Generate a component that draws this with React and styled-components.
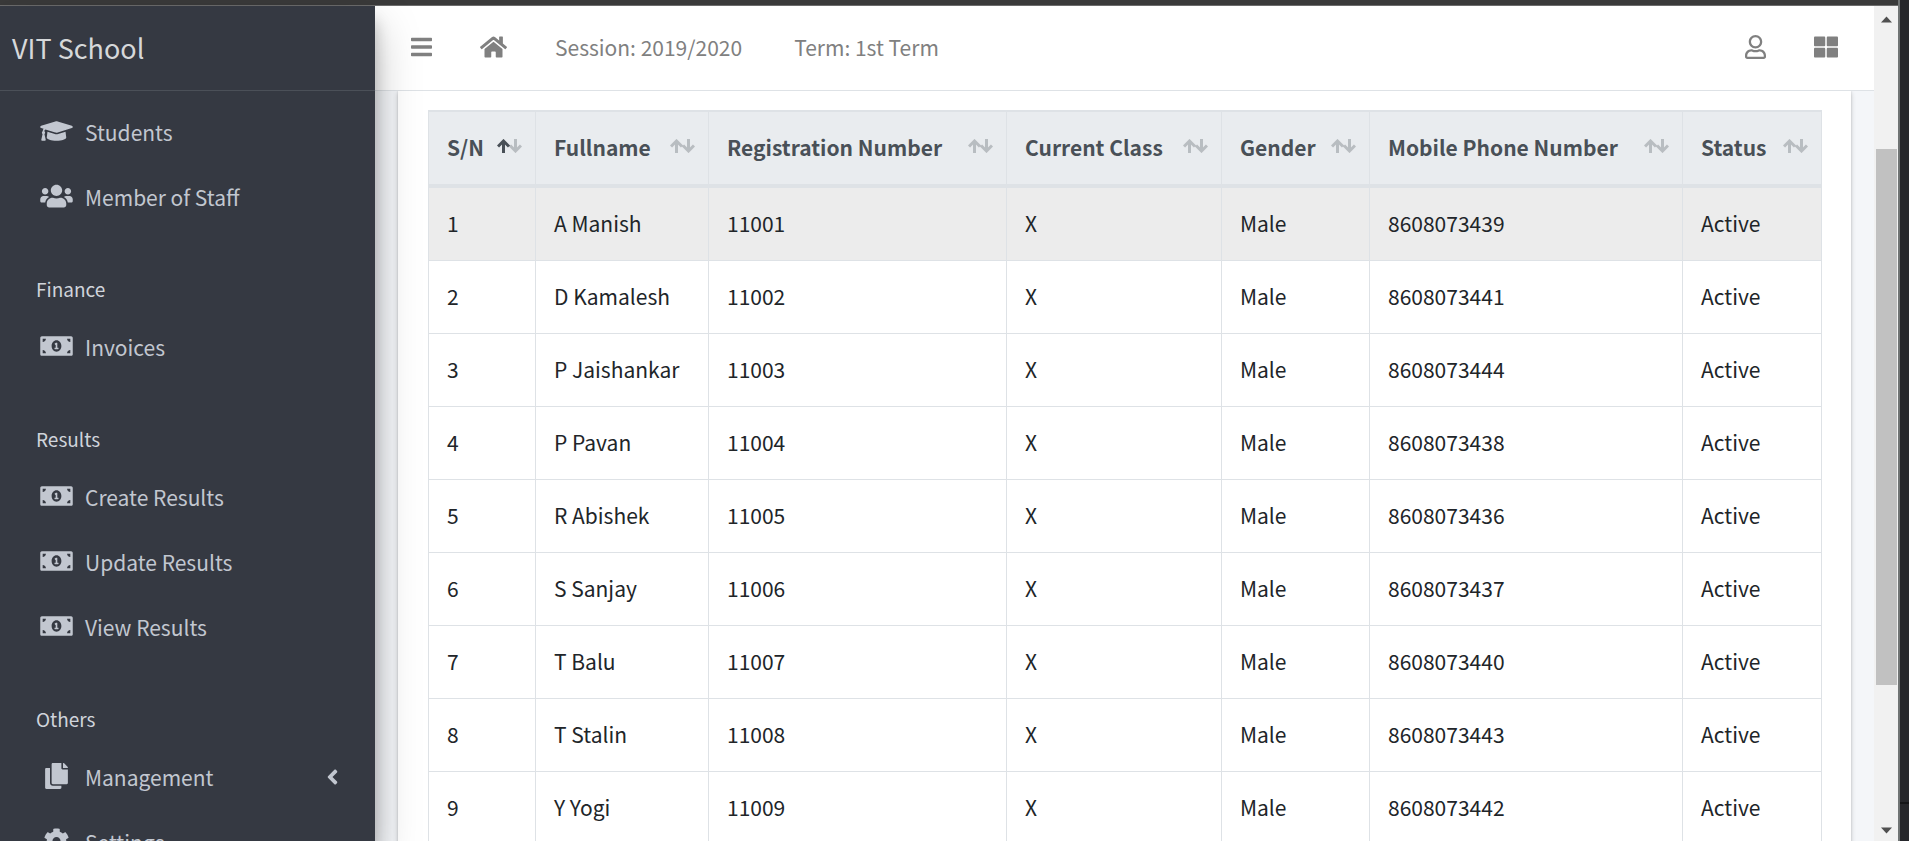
import React from "react";
import styled, { createGlobalStyle } from "styled-components";
import {
  FaAngleLeft,
  FaBars,
  FaCog,
  FaCopy,
  FaGraduationCap,
  FaHome,
  FaMoneyBillAlt,
  FaRegUser,
  FaThLarge,
  FaUsers,
} from "react-icons/fa";

const menu = [
  {
    items: [
      { label: "Students", icon: FaGraduationCap },
      { label: "Member of Staff", icon: FaUsers },
    ],
  },
  {
    title: "Finance",
    items: [{ label: "Invoices", icon: FaMoneyBillAlt }],
  },
  {
    title: "Results",
    items: [
      { label: "Create Results", icon: FaMoneyBillAlt },
      { label: "Update Results", icon: FaMoneyBillAlt },
      { label: "View Results", icon: FaMoneyBillAlt },
    ],
  },
  {
    title: "Others",
    items: [
      { label: "Management", icon: FaCopy, nested: true },
      { label: "Settings", icon: FaCog },
    ],
  },
];

const columns = [
  { label: "S/N", width: 107, sorted: true },
  { label: "Fullname", width: 173 },
  { label: "Registration Number", width: 298 },
  { label: "Current Class", width: 215 },
  { label: "Gender", width: 148 },
  { label: "Mobile Phone Number", width: 313 },
  { label: "Status", width: 139 },
];

const students = [
  ["A Manish", "11001", "8608073439"],
  ["D Kamalesh", "11002", "8608073441"],
  ["P Jaishankar", "11003", "8608073444"],
  ["P Pavan", "11004", "8608073438"],
  ["R Abishek", "11005", "8608073436"],
  ["S Sanjay", "11006", "8608073437"],
  ["T Balu", "11007", "8608073440"],
  ["T Stalin", "11008", "8608073443"],
  ["Y Yogi", "11009", "8608073442"],
];

const SortIcon = ({ sorted }) => (
  <SortSvg viewBox="0 0 25 14" aria-hidden="true">
    <path d="M6.5 14V2M1 7.5L6.5 2L12 7.5" opacity={sorted ? 1 : 0.3} />
    <path d="M18.5 0V12M13 6.5L18.5 12L24 6.5" opacity="0.3" />
  </SortSvg>
);

const Sidebar = () => (
  <Aside>
    <Brand href="#home">VIT School</Brand>
    <Nav>
      {menu.map(({ title, items }) => (
        <React.Fragment key={title || "people"}>
          {title && <NavTitle>{title}</NavTitle>}
          {items.map(({ label, icon: Icon, nested }) => (
            <NavLink href="#" key={label}>
              <NavIcon>
                <Icon />
              </NavIcon>
              <NavText>{label}</NavText>
              {nested && <FaAngleLeft />}
            </NavLink>
          ))}
        </React.Fragment>
      ))}
    </Nav>
  </Aside>
);

const Topbar = () => (
  <Header>
    <IconButton $width={21} aria-label="Toggle menu">
      <FaBars />
    </IconButton>
    <IconButton as="a" $width={27} href="#home" aria-label="Home">
      <FaHome />
    </IconButton>
    <TopLink href="#session">Session: 2019/2020</TopLink>
    <TopLink href="#term">Term: 1st Term</TopLink>
    <Spacer />
    <IconButton $width={21} aria-label="Account">
      <FaRegUser />
    </IconButton>
    <IconButton $width={24} aria-label="Apps">
      <FaThLarge />
    </IconButton>
  </Header>
);

const StudentTable = () => (
  <Table>
    <colgroup>
      {columns.map(({ label, width }) => (
        <Col key={label} $width={width} />
      ))}
    </colgroup>
    <thead>
      <tr>
        {columns.map(({ label, sorted }) => (
          <Th key={label} aria-sort={sorted ? "ascending" : "none"}>
            <SortButton>
              {label}
              <SortIcon sorted={sorted} />
            </SortButton>
          </Th>
        ))}
      </tr>
    </thead>
    <tbody>
      {students.map(([name, number, phone], index) => (
        <Row key={number} $active={index === 0}>
          <Td>{index + 1}</Td>
          <Td>{name}</Td>
          <Td>{number}</Td>
          <Td>X</Td>
          <Td>Male</Td>
          <Td>{phone}</Td>
          <Td>Active</Td>
        </Row>
      ))}
    </tbody>
  </Table>
);

const App = () => (
  <Frame>
    <GlobalStyle />
    <Browser>
      <TitleEdge />
      <Page>
        <Sidebar />
        <Main>
          <Topbar />
          <Content>
            <Card>
              <StudentTable />
            </Card>
          </Content>
        </Main>
        <Scrollbar>
          <ScrollArrow>
            <path d="M0 6L5.5 0L11 6Z" />
          </ScrollArrow>
          <Track $size={119} />
          <Thumb $size={536} />
          <Track $size={132} />
          <ScrollArrow>
            <path d="M0 0L5.5 6L11 0Z" />
          </ScrollArrow>
        </Scrollbar>
      </Page>
    </Browser>
    <Desktop>
      <DesktopPanel />
    </Desktop>
  </Frame>
);

export default App;

const GlobalStyle = createGlobalStyle`
  * {
    box-sizing: border-box;
  }
  body {
    margin: 0;
    overflow: hidden;
    font-family: "Source Sans Pro", "Noto Sans CJK SC", "Open Sans", sans-serif;
    font-size: 21px;
    line-height: 36px;
    color: #212529;
  }
  a {
    color: inherit;
    text-decoration: none;
  }
  button {
    border: none;
    padding: 0;
    background: none;
    font: inherit;
    color: inherit;
    cursor: pointer;
  }
`;

const Frame = styled.div`
  display: flex;
  height: 100vh;
  overflow: hidden;
`;

const Browser = styled.div`
  flex: 1;
  min-width: 0;
  display: flex;
  flex-direction: column;
  border-right: 2px solid #707474;
`;

const TitleEdge = styled.div`
  flex: none;
  height: 6px;
  background-color: #3a3a3a;
  border-bottom: 1px solid #6c6c6c;
`;

const Page = styled.div`
  flex: 1;
  min-height: 0;
  display: flex;
`;

const Aside = styled.aside`
  flex: none;
  width: 375px;
  z-index: 2;
  overflow: hidden;
  background-color: #353942;
  color: #c2c7d0;
  box-shadow: 0 21px 42px rgba(0, 0, 0, 0.25), 0 15px 15px rgba(0, 0, 0, 0.22);
`;

const Brand = styled.a`
  display: flex;
  align-items: center;
  height: 85px;
  padding: 0 12px;
  border-bottom: 1px solid #4b5058;
  font-size: 27px;
  color: #d6d8da;
`;

const Nav = styled.nav`
  padding: 12px 0;
`;

const NavTitle = styled.h2`
  margin: 0;
  padding: 42px 36px 15px;
  font-size: 19px;
  font-weight: 400;
  line-height: 28px;
  color: #d0d4db;
`;

const NavLink = styled.a`
  display: flex;
  align-items: center;
  gap: 12px;
  height: 60px;
  margin-bottom: 5px;
  padding: 0 32px 3px 40px;
  > svg {
    height: 24px;
  }
`;

const NavIcon = styled.span`
  display: flex;
  justify-content: center;
  width: 33px;
  padding-bottom: 2px;
  svg {
    width: 33px;
    height: 26px;
  }
`;

const NavText = styled.span`
  flex: 1;
`;

const Main = styled.main`
  flex: 1;
  min-width: 0;
  display: flex;
  flex-direction: column;
  overflow: hidden;
  background-color: #f4f6f9;
`;

const Header = styled.header`
  flex: none;
  z-index: 1;
  display: flex;
  align-items: center;
  gap: 48px;
  height: 85px;
  padding: 0 36px 3px;
  border-bottom: 1px solid #dee2e6;
  background-color: #fff;
  color: #808080;
`;

const IconButton = styled.button`
  display: flex;
  svg {
    width: ${({ $width }) => $width}px;
    height: 24px;
  }
`;

const TopLink = styled.a`
  padding-right: 4px;
  white-space: nowrap;
`;

const Spacer = styled.div`
  flex: 1;
`;

const Content = styled.section`
  flex: 1;
  min-height: 0;
  padding: 0 23px;
`;

const Card = styled.div`
  padding: 19px 30px 30px;
  background-color: #fff;
  box-shadow: 0 0 2px rgba(0, 0, 0, 0.13), 0 2px 5px rgba(0, 0, 0, 0.2);
`;

const Table = styled.table`
  width: 100%;
  table-layout: fixed;
  border-collapse: separate;
  border-spacing: 0;
  border-right: 1px solid #dee2e6;
`;

const Col = styled.col`
  width: ${({ $width }) => $width}px;
`;

const Th = styled.th`
  padding: 17px 13px 19px 18px;
  border-left: 1px solid #dee2e6;
  border-top: 2px solid #dee2e6;
  border-bottom: 4px solid #dee2e6;
  background-color: #e9ecef;
  color: #495057;
`;

const SortButton = styled.button`
  display: flex;
  align-items: center;
  justify-content: space-between;
  width: 100%;
  font-weight: 700;
  white-space: nowrap;
`;

const SortSvg = styled.svg`
  flex: none;
  width: 25px;
  height: 16px;
  padding-bottom: 2px;
  fill: none;
  stroke: currentColor;
  stroke-width: 3;
`;

const Row = styled.tr`
  background-color: ${({ $active }) => ($active ? "#ececec" : "#fff")};
`;

const Td = styled.td`
  padding: 17px 18px 19px;
  border-left: 1px solid #dee2e6;
  border-bottom: 1px solid #dee2e6;
`;

const Scrollbar = styled.div`
  flex: none;
  display: flex;
  flex-direction: column;
  align-items: center;
  width: 24px;
  background-color: #f1f1f1;
`;

const ScrollArrow = styled.svg.attrs({ viewBox: "0 0 11 6" })`
  flex: none;
  width: 11px;
  height: 24px;
  padding-top: 3px;
  fill: #505050;
`;

const Track = styled.div`
  flex: ${({ $size }) => $size};
`;

const Thumb = styled.div`
  flex: ${({ $size }) => $size};
  width: 21px;
  background-color: #c1c1c1;
`;

const Desktop = styled.div`
  flex: none;
  display: flex;
  flex-direction: column;
  width: 9px;
  background-color: #26272b;
`;

const DesktopPanel = styled.div`
  height: 39px;
  margin-top: auto;
  border-top: 2px solid #151618;
`;
